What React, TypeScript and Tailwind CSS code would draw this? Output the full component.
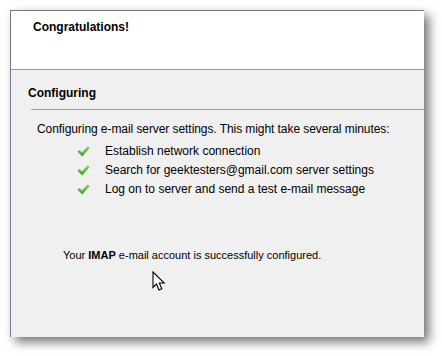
import React from "react";

function Check() {
  return (
    <svg width="13" height="11" viewBox="0 0 13 11" className="shrink-0">
      <defs>
        <linearGradient id="g" x1="0" y1="0" x2="0" y2="1">
          <stop offset="0" stopColor="#7ddc5a" />
          <stop offset="1" stopColor="#3b9e2a" />
        </linearGradient>
      </defs>
      <path d="M0.3 5.6 L2.6 4 L5 6.6 L10.8 0.3 L12.7 1.9 L5.2 10.4 Z" fill="url(#g)" />
    </svg>
  );
}

function Cursor() {
  return (
    <svg width="14" height="21" viewBox="0 0 14 21" className="absolute left-[152px] top-[271px]">
      <path
        d="M1 1 L1 16.5 L4.5 13 L7 19 L9.8 17.8 L7.3 12 L12.2 12 Z"
        fill="#fff"
        stroke="#000"
        strokeWidth="1.1"
        strokeLinejoin="miter"
      />
    </svg>
  );
}

const steps = [
  "Establish network connection",
  "Search for geektesters@gmail.com server settings",
  "Log on to server and send a test e-mail message",
];

export default function App() {
  return (
    <div className="relative h-[356px] w-[442px] bg-white pl-[10px] pt-[10px] text-[12px] text-black [font-family:'Liberation_Sans',Arial,sans-serif]">
      <div className="flex h-[327px] w-[414px] flex-col border-l border-t border-[#6e7a88] bg-[#f0f0f0] shadow-[5px_5px_10px_rgba(0,0,0,0.55)]">
        <div className="h-[59px] border-b border-[#a0a0a0] bg-white pl-[22px] pt-[9px] font-bold leading-[15px]">
          Congratulations!
        </div>
        <div className="pl-[17px] pt-[16px] font-bold leading-[15px]">Configuring</div>
        <div className="ml-[20px] mt-[8px] h-px bg-[#a0a0a0]" />
        <div className="pl-[26px] pt-[12px] leading-[15px] tracking-[-0.07px]">
          Configuring e-mail server settings. This might take several minutes:
        </div>
        <div className="flex flex-col gap-[4px] pl-[66px] pt-[7px]">
          {steps.map((s) => (
            <div key={s} className="flex items-center gap-[15px] leading-[15px]">
              <Check />
              <span>{s}</span>
            </div>
          ))}
        </div>
        <div className="pl-[52px] pt-[51px] text-[11px] leading-[14px]">
          Your <span className="font-bold">IMAP</span> e-mail account is successfully configured.
        </div>
      </div>
      <Cursor />
    </div>
  );
}
